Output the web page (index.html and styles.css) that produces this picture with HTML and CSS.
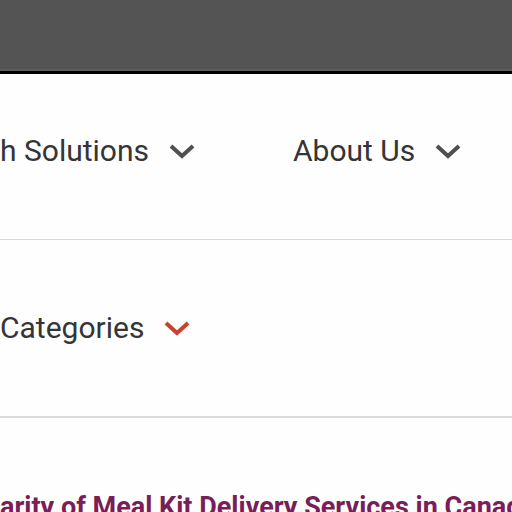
FILE: index.html
```html
<!DOCTYPE html>
<html>
<head>
<meta charset="utf-8">
<link rel="stylesheet" href="styles.css">
</head>
<body>
<div class="topbar"></div>
<nav class="nav">
  <div class="nav-item item-solutions">
    <span class="label">h Solutions</span>
    <svg class="chev" width="26" height="16" viewBox="0 0 26 16"><polyline points="2,3 13,13 24,3" fill="none" stroke="#505050" stroke-width="4" stroke-linecap="butt" stroke-linejoin="miter"/></svg>
  </div>
  <div class="nav-item item-about">
    <span class="label">About Us</span>
    <svg class="chev" width="26" height="16" viewBox="0 0 26 16"><polyline points="2,3 13,13 24,3" fill="none" stroke="#505050" stroke-width="4" stroke-linecap="butt" stroke-linejoin="miter"/></svg>
  </div>
</nav>
<div class="cats">
  <div class="nav-item">
    <span class="label">Categories</span>
    <svg class="chev chev-red" width="26" height="16" viewBox="0 0 26 16"><polyline points="2,3 13,13 24,3" fill="none" stroke="#c8432e" stroke-width="4" stroke-linecap="butt" stroke-linejoin="miter"/></svg>
  </div>
</div>
<div class="title-row">
  <h1 class="title">arity of Meal Kit Delivery Services in Canada</h1>
</div>
</body>
</html>
```

FILE: styles.css
```css
html, body {
  margin: 0;
  padding: 0;
  width: 512px;
  height: 512px;
  overflow: hidden;
  background: #fefefe;
  font-family: Roboto, "Liberation Sans", sans-serif;
}
.topbar {
  height: 71px;
  background: #545454;
  border-bottom: 3px solid #000;
  box-shadow: inset 0 -2px 0 #5e5e5e;
}
.nav {
  height: 153px;
  padding-bottom: 12px;
  display: flex;
  align-items: center;
  border-bottom: 1px solid #dadada;
}
.nav-item {
  display: flex;
  align-items: center;
}
.label {
  font-size: 30px;
  color: #353535;
  line-height: 1;
}
.chev {
  display: block;
  margin-left: 20px;
}
.item-about {
  margin-left: 98px;
}
.cats {
  height: 176px;
  display: flex;
  align-items: center;
  border-bottom: 2px solid #d8dadd;
}
.title-row {
  padding-top: 73px;
  overflow: hidden;
}
.title {
  margin: 0;
  font-size: 27px;
  font-weight: 700;
  color: #7a1d58;
  white-space: nowrap;
  line-height: 1.2;
}
```
